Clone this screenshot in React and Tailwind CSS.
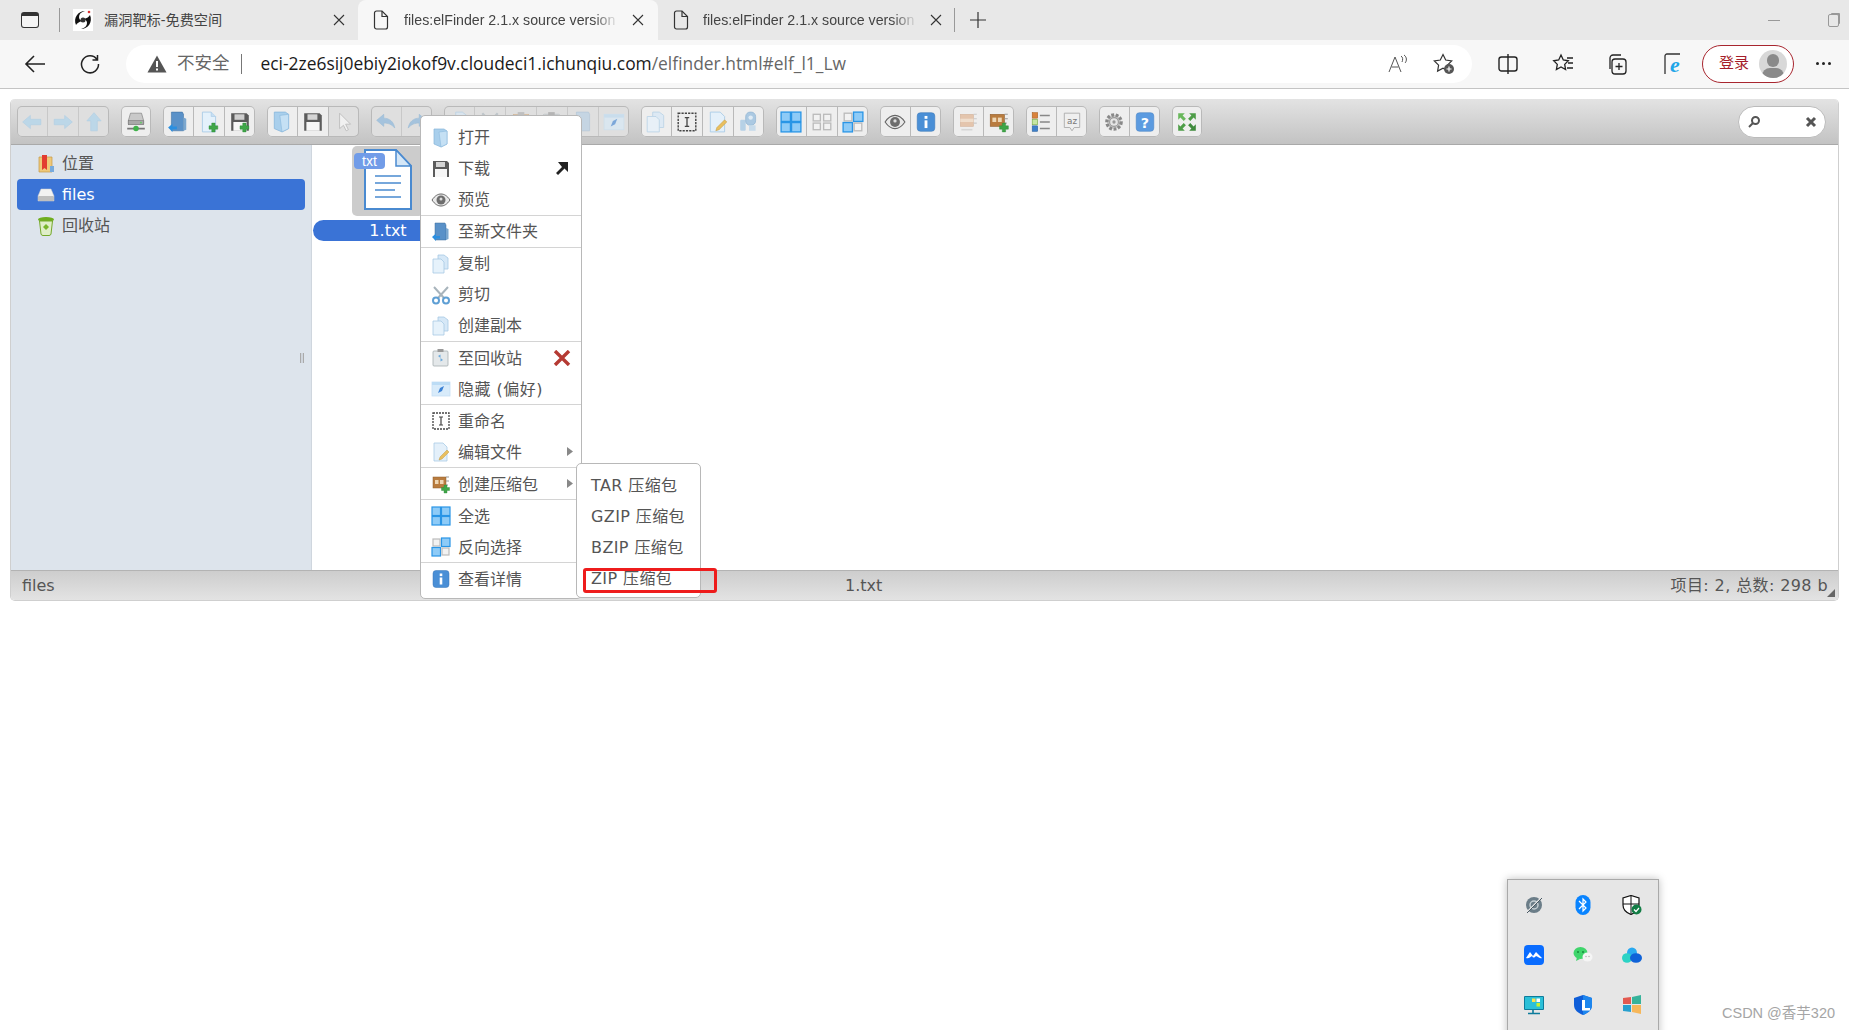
import React from "react";

const S = ({ s = 20, children, className = "" }) => (
  <svg width={s} height={s} viewBox="0 0 20 20" className={`shrink-0 ${className}`}>{children}</svg>
);
const Plus = ({ x = 14, y = 15 }) => (
  <path d={`M${x - 1.5} ${y - 4}h3v2.5h2.5v3h-2.5v2.5h-3v-2.5h-2.500v-3h2.500z`} fill="#3fa648" stroke="#2d8a38" strokeWidth=".4" />
);
const Ic = {
  left: <path d="M1.500 10 8.500 4v3.500H18v5H8.500V16z" fill="#a6d2ee" stroke="#93c4e6" strokeWidth=".6" />,
  right: <path d="M18.500 10 11.500 4v3.500H2v5h9.500V16z" fill="#a6d2ee" stroke="#93c4e6" strokeWidth=".6" />,
  up: <path d="M10 1.500 16.500 9H13v9H7V9H3.500z" fill="#a6d2ee" stroke="#93c4e6" strokeWidth=".6" />,
  drive: <><path d="M5 2h10l2 7v3H3V9z" fill="#c9c9c9" stroke="#8a8a8a" strokeWidth=".7" /><rect x="3" y="8.500" width="14" height="4" fill="#a8a8a8" stroke="#777" strokeWidth=".5" /><circle cx="14.500" cy="10.500" r=".8" fill="#5ed05e" /><path d="M2 16h16" stroke="#777" strokeWidth="1.500" /><circle cx="10" cy="16" r="2.500" fill="#3fb24a" /></>,
  mkdir: <><path d="M4 1h10l1 2v15H4z" fill="#5a91c8" stroke="#3f6f9f" strokeWidth=".5" /><path d="M15 6l2.500 1v10L15 18z" fill="#7ba7cf" /><path d="M1 15l4-3.500V14h4v2.500H5V19z" fill="#2b8fe0" /></>,
  mkfile: <><path d="M4 1h8l4 4v14H4z" fill="#e4f1fb" stroke="#a9cbe6" strokeWidth=".8" /><path d="M12 1v4h4" fill="#c6def2" stroke="#a9cbe6" strokeWidth=".6" /><Plus /></>,
  floppyAdd: <><path d="M2 2h14l2 2v14H2z" fill="#5a5a5a" /><rect x="5" y="3" width="9" height="5" fill="#cfcfcf" /><rect x="4" y="10" width="12" height="8" fill="#f7f7f7" /><Plus /></>,
  open: <><path d="M3 1h10l3 2v13l-6 3-7-3z" fill="#a9cfec" stroke="#86b5da" strokeWidth=".7" /><path d="M8 4l8-1v13l-6 3z" fill="#c5e0f4" stroke="#8dbbdd" strokeWidth=".6" /></>,
  floppy: <><path d="M2 2h14l2 2v14H2z" fill="#5c5c5c" /><rect x="5" y="3" width="9" height="5" fill="#d5d5d5" /><rect x="4" y="10" width="12" height="8" fill="#f7f7f7" /></>,
  cursor: <path d="M6 2v14l3.500-3 2.500 5 2-1-2.500-5H16z" fill="#f1f1f1" stroke="#bcbcbc" strokeWidth=".8" />,
  undo: <path d="M1.500 8.500 8 3v3.500c5 0 9 3 10 9-3-3.500-6-4.500-10-4.500V14z" fill="#7fb2dd" stroke="#6a9fcb" strokeWidth=".5" />,
  redo: <path d="M18.500 8.500 12 3v3.500c-5 0-9 3-10 9 3-3.500 6-4.500 10-4.500V14z" fill="#7fb2dd" stroke="#6a9fcb" strokeWidth=".5" />,
  copy: <><path d="M7 1h6l4 3v11H7z" fill="#d6e8f7" stroke="#a7c9e4" strokeWidth=".8" /><path d="M2 5h8l3 3v11H2z" fill="#e6f2fb" stroke="#a7c9e4" strokeWidth=".8" /></>,
  cut: <><path d="M3 2l10 11M17 2 7 13" stroke="#a8b4bc" strokeWidth="2" /><circle cx="5" cy="15.500" r="3" fill="none" stroke="#5f9fd4" strokeWidth="2" /><circle cx="15" cy="15.500" r="3" fill="none" stroke="#5f9fd4" strokeWidth="2" /></>,
  paste: <><rect x="3" y="3" width="14" height="15" fill="#e0b88c" stroke="#c89a68" strokeWidth=".6" /><rect x="7" y="1" width="6" height="4" fill="#aaa" /><rect x="6" y="7" width="9" height="10" fill="#f0f0f0" /></>,
  rm: <><rect x="2" y="3" width="15" height="15" rx="1" fill="#e4e8ea" stroke="#a5adb0" strokeWidth=".8" /><rect x="6.500" y="1" width="6" height="3" fill="#999" /><path d="M7 8l2.500-1.500V10zM12 12l-2.500 1.500V10z" fill="#6aa8dc" /></>,
  folderPale: <path d="M4 1h11l1 2v15H4z" fill="#b5cfe6" stroke="#92b4d0" strokeWidth=".6" />,
  hide: <><rect x="1" y="3" width="18" height="14" fill="#d8ebfa" stroke="#c5dff4" strokeWidth=".8" /><path d="M1 3h18v3H1z" fill="#bcdcf5" /><path d="M13 7l-2 5-4 2 2-5z" fill="#3c82d6" /></>,
  rename: <><rect x="2" y="2" width="16" height="16" fill="none" stroke="#444" strokeWidth="1.300" strokeDasharray="2 1" /><path d="M8 6h4M10 6v8M8 14h4" stroke="#444" strokeWidth="1.200" /></>,
  edit: <><path d="M3 1h9l4 4v14H3z" fill="#e4f0fa" stroke="#a9cbe6" strokeWidth=".8" /><path d="M8 18l1-3 7-7 2 2-7 7z" fill="#e9bf5f" stroke="#b78e32" strokeWidth=".4" /></>,
  resize: <><rect x="2" y="8" width="5" height="10" rx="1" fill="#9fc5e4" /><rect x="7" y="1" width="9" height="12" rx="4" fill="#8fbade" stroke="#6f9fc8" strokeWidth=".7" /><circle cx="11.500" cy="6" r="2" fill="#d9ebf8" /><rect x="10" y="13" width="6" height="5" fill="#b7d4ea" /></>,
  all: <><rect x="1" y="1" width="8.500" height="8.500" fill="#8ecbf7" stroke="#2995e6" strokeWidth="1.200" /><rect x="10.500" y="1" width="8.500" height="8.500" fill="#8ecbf7" stroke="#2995e6" strokeWidth="1.200" /><rect x="1" y="10.500" width="8.500" height="8.500" fill="#8ecbf7" stroke="#2995e6" strokeWidth="1.200" /><rect x="10.500" y="10.500" width="8.500" height="8.500" fill="#8ecbf7" stroke="#2995e6" strokeWidth="1.200" /></>,
  none: <><rect x="2" y="3" width="6.500" height="6" fill="#f2f2f2" stroke="#bbb" strokeWidth="1.200" /><rect x="11.500" y="3" width="6.500" height="6" fill="#f2f2f2" stroke="#bbb" strokeWidth="1.200" /><rect x="2" y="11" width="6.500" height="6" fill="#f2f2f2" stroke="#bbb" strokeWidth="1.200" /><rect x="11.500" y="11" width="6.500" height="6" fill="#f2f2f2" stroke="#bbb" strokeWidth="1.200" /></>,
  invert: <><rect x="2" y="2" width="7" height="7" fill="#f2f2f2" stroke="#bbb" strokeWidth="1.200" /><rect x="10.500" y="1" width="8.500" height="8.500" fill="#8ecbf7" stroke="#2995e6" strokeWidth="1.200" /><rect x="1" y="10.500" width="8.500" height="8.500" fill="#8ecbf7" stroke="#2995e6" strokeWidth="1.200" /><rect x="11" y="11" width="7" height="7" fill="#f2f2f2" stroke="#bbb" strokeWidth="1.200" /></>,
  eye: <><path d="M1 10c3-4.500 6-6 9-6s6 1.500 9 6c-3 4.500-6 6-9 6s-6-1.500-9-6z" fill="#e9e9e9" stroke="#666" strokeWidth="1" /><circle cx="10" cy="10" r="4.500" fill="#6d6d6d" /><circle cx="10" cy="9" r="1.500" fill="#ddd" /></>,
  info: <><rect x="2" y="1.500" width="16" height="17" rx="3" fill="#4a8fd6" stroke="#3a77b8" strokeWidth=".5" /><rect x="8.700" y="4.500" width="2.600" height="2.600" fill="#fff" /><rect x="8.700" y="8.500" width="2.600" height="7" fill="#fff" /></>,
  extract: <><rect x="3" y="3" width="12" height="11" fill="#e0b592" stroke="#c89a78" strokeWidth=".5" /><rect x="3" y="7" width="12" height="3" fill="#f0d8c0" /><path d="M15 3h3M15 7h3M15 11h3" stroke="#bbb" /><path d="M4 17h10" stroke="#ccc" strokeWidth="1.500" /></>,
  archive: <><rect x="2" y="3" width="13" height="11" fill="#b97c3f" stroke="#8f5c2b" strokeWidth=".5" /><rect x="4" y="6" width="3.500" height="4" fill="#eed7b5" /><rect x="9" y="6" width="3.500" height="4" fill="#eed7b5" /><path d="M15 3h3M15 7h3M15 11h2" stroke="#999" /><Plus x={14.500} y={15} /></>,
  list: <><rect x="2" y="1.500" width="5" height="5" fill="#d9823b" stroke="#a75f22" strokeWidth=".5" /><rect x="2" y="7.500" width="5" height="5" fill="#c6e6a3" stroke="#6fa43c" strokeWidth=".5" /><rect x="2" y="13.500" width="5" height="5" fill="#3d7fc9" stroke="#2c619c" strokeWidth=".5" /><path d="M9 4h9M9 10h9M9 16h9" stroke="#888" strokeWidth="1.400" /></>,
  sort: <><path d="M3 2h14v13h-5l-2 3-2-3H3z" fill="#efefef" stroke="#aaa" strokeWidth=".8" /><text x="10" y="12" textAnchor="middle" fontSize="8" fill="#777" fontFamily="DejaVu Sans">az</text></>,
  gear: <><circle cx="10" cy="10" r="6.500" fill="#c9c9c9" stroke="#888" strokeWidth="3" strokeDasharray="2.500 1.500" /><circle cx="10" cy="10" r="4" fill="#e5e5e5" stroke="#999" /><circle cx="10" cy="10" r="1.500" fill="#999" /></>,
  help: <><rect x="2" y="1.500" width="16" height="17" rx="3" fill="#5c9be0" stroke="#4a85c4" strokeWidth=".5" /><text x="10" y="15" textAnchor="middle" fontSize="13" fontWeight="700" fill="#fff" fontFamily="DejaVu Sans">?</text></>,
  full: <><path d="M2 2h6L6 4l3 3-2 2-3-3-2 2z" fill="#69b85c" /><path d="M18 2v6l-2-2-3 3-2-2 3-3-2-2z" fill="#4e9d48" /><path d="M2 18v-6l2 2 3-3 2 2-3 3 2 2z" fill="#4e9d48" /><path d="M18 18h-6l2-2-3-3 2-2 3 3 2-2z" fill="#3f8a3d" /></>,
};

const groups = [
  { d: 1, i: ["left", "right", "up"] },
  { i: ["drive"] },
  { i: ["mkdir", "mkfile", "floppyAdd"] },
  { i: ["open", "floppy"], extra: "cursor" },
  { d: 1, i: ["undo", "redo"] },
  { d: 1, i: ["copy", "cut", "paste", "rm", "folderPale", "hide"] },
  { i: ["copy", "rename", "edit", "resize"], dim: [0, 3] },
  { i: ["all", "none", "invert"] },
  { i: ["eye", "info"] },
  { i: ["extract", "archive"], dim: [0] },
  { i: ["list", "sort"] },
  { i: ["gear", "help"] },
  { i: ["full"] },
];

const menu = [
  [["open", "打开"], ["floppy", "下载", "arrow"], ["eye", "预览"]],
  [["mkdir", "至新文件夹"]],
  [["copy", "复制"], ["cut", "剪切"], ["copy", "创建副本"]],
  [["rm", "至回收站", "x"], ["hide", "隐藏 (偏好)"]],
  [["rename", "重命名"], ["edit", "编辑文件", "sub"]],
  [["archive", "创建压缩包", "sub"]],
  [["all", "全选"], ["invert", "反向选择"]],
  [["info", "查看详情"]],
];

const zh = "font-['Liberation_Sans','Noto_Sans_CJK_SC',sans-serif]";
const ef = "font-['DejaVu_Sans','Noto_Sans_CJK_SC',sans-serif]";

const PageIcon = () => (
  <svg width="16" height="20" viewBox="0 0 16 20" className="shrink-0" fill="none" stroke="#333" strokeWidth="1.200">
    <path d="M1.500 3a2 2 0 0 1 2-2h5.500l5.500 5.500V17a2 2 0 0 1-2 2h-9a2 2 0 0 1-2-2z" />
    <path d="M9 1v5.500h5.500" />
  </svg>
);
const X = () => (
  <svg width="12" height="12" viewBox="0 0 12 12" className="shrink-0" stroke="#333" strokeWidth="1.100"><path d="M1 1l10 10M11 1 1 11" /></svg>
);

function Tab({ active, title, className, gap, xgap }) {
  return (
    <div className={`flex items-center h-10 ${active ? "bg-[#f7f7f7] rounded-t-lg" : ""} ${className}`}>
      <PageIcon />
      <span className={`${gap} w-[215px] pt-px overflow-hidden whitespace-nowrap text-[14.200px] text-[#444] ${zh} [mask-image:linear-gradient(to_right,black_88%,transparent)]`}>{title}</span>
      <span className={`${xgap} flex`}><X /></span>
    </div>
  );
}

export default function App() {
  return (
    <div className="relative w-[1849px] h-[1030px] overflow-hidden bg-white">
      {/* tab strip */}
      <div className="flex items-center h-10 bg-[#e8e8e8]">
        <div className="ml-[21px] w-[18px] h-[16px] rounded-[3px] border-[1.500px] border-[#333] border-t-[4px] bg-[#f5f5f5]" />
        <div className="ml-5 w-px h-6 bg-[#999]" />
        <div className="ml-[13px] w-[285px] flex items-center">
          <svg width="20" height="22" viewBox="0 0 20 22" className="shrink-0">
            <rect width="20" height="22" fill="#fff" />
            <path d="M3 16C0 9 5 2 12 2c-4 1-6 3-6 6 0 2 1 3 3 4-3 1-5 2-6 4z" fill="#111" />
            <path d="M17 6c3 7-2 14-9 14 4-1 6-3 6-6 0-2-1-3-3-4 3-1 5-2 6-4z" fill="#111" />
            <circle cx="10" cy="11" r="2.500" fill="#333" />
            <circle cx="16" cy="3" r="1.300" fill="#d33" />
          </svg>
          <span className={`ml-[11px] pt-px text-[14.200px] text-[#444] ${zh}`}>漏洞靶标-免费空间</span>
          <span className="ml-auto mr-[13px] flex"><X /></span>
        </div>
        <Tab active title="files:elFinder 2.1.x source version" className="w-[300px] pl-[15px]" gap="ml-[15px]" xgap="ml-[13px]" />
        <Tab title="files:elFinder 2.1.x source version" className="w-[296px] pl-[15px]" gap="ml-[14px]" xgap="ml-[12px]" />
        <div className="w-px h-6 bg-[#999]" />
        <svg width="18" height="18" viewBox="0 0 18 18" className="ml-[14px]" stroke="#333" strokeWidth="1.200"><path d="M9 1v16M1 9h16" /></svg>
        <div className="ml-auto mr-[10px] flex items-center gap-[48px]">
          <div className="w-3 h-px bg-[#999]" />
          <div className="relative w-[11px] h-[13px] border border-[#999] rounded-[2px] bg-[#e8e8e8] shadow-[2px_-2px_0_-1px_#999]" />
        </div>
      </div>
      {/* address bar */}
      <div className="flex items-center h-[49px] bg-[#f7f7f7] border-b border-[#c4c4c4] pb-px">
        <svg width="22" height="20" viewBox="0 0 22 20" className="ml-6" stroke="#222" strokeWidth="1.600" fill="none"><path d="M21 10H2M10 2l-8 8 8 8" /></svg>
        <svg width="22" height="22" viewBox="0 0 22 22" className="ml-[33px]" stroke="#222" strokeWidth="1.500" fill="none"><path d="M18 6.500A8.500 8.500 0 1 0 19.500 11M18.500 2v5h-5" /></svg>
        <div className="ml-[25px] flex items-center w-[1346px] h-[38px] rounded-[19px] bg-white">
          <svg width="20" height="18" viewBox="0 0 20 18" className="ml-[21px]"><path d="M10 0.500 19.500 17.500H.5z" fill="#555" /><path d="M9 6h2v6H9zM9 13.500h2v2H9z" fill="#fff" /></svg>
          <span className={`ml-[10px] text-[17.500px] text-[#666] ${zh}`}>不安全</span>
          <span className="ml-[11px] w-px h-5 bg-[#777]" />
          <span className="ml-[19px] whitespace-nowrap text-[17.400px] text-[#1a1a1a] font-['Open_Sans',sans-serif]">eci-2ze6sij0ebiy2iokof9v.cloudeci1.ichunqiu.com<span className="text-[#666]">/elfinder.html#elf_l1_Lw</span></span>
          <div className="ml-auto flex items-center mr-[17px] gap-[24px]">
            <svg width="22" height="20" viewBox="0 0 22 20" fill="none" stroke="#555" strokeWidth="1"><path d="M2 18 8 3l6 15M4.500 13h7M14 2c2 1 2 4 1 6M17 1c3 2 3 6 1 8" /></svg>
            <svg width="22" height="22" viewBox="0 0 22 22"><path d="M10 1.500l2.700 5.500 6 .9-4.300 4.200 1 6-5.400-2.800-5.400 2.800 1-6L1.300 7.900l6-.9z" fill="none" stroke="#333" strokeWidth="1.200" /><circle cx="16" cy="16" r="5" fill="#555" /><path d="M16 13.500v5M13.500 16h5" stroke="#fff" strokeWidth="1.200" /></svg>
          </div>
        </div>
        <svg width="20" height="20" viewBox="0 0 20 20" className="ml-[26px]" fill="none" stroke="#222" strokeWidth="1.400"><rect x="1" y="3" width="18" height="14" rx="2.500" /><path d="M10 0v20" /></svg>
        <svg width="22" height="22" viewBox="0 0 22 22" className="ml-[34px]" fill="none" stroke="#222" strokeWidth="1.300"><path d="M9 2l2.300 5 5 .8-3.600 3.600.9 5.200L9 14l-4.600 2.600.9-5.200L1.700 7.800l5-.8zM15 5h6M16 10h5M15 15h6" /></svg>
        <svg width="22" height="22" viewBox="0 0 22 22" className="ml-[32px]" fill="none" stroke="#222" strokeWidth="1.300"><path d="M4 16V5a3 3 0 0 1 3-3h8" /><rect x="6" y="6" width="14" height="15" rx="3" /><path d="M13 10v7M9.500 13.500h7" /></svg>
        <svg width="22" height="24" viewBox="0 0 22 24" className="ml-[35px]"><path d="M2 22V4a2 2 0 0 1 2-2h13" fill="none" stroke="#333" strokeWidth="1.300" /><text x="12" y="20" textAnchor="middle" fontSize="22" fontWeight="700" fontStyle="italic" fill="#1fa6e8" fontFamily="Liberation Serif">e</text></svg>
        <div className="ml-[17px] flex items-center w-[92px] h-[38px] rounded-[19px] border border-[#a8262f] bg-white">
          <span className={`ml-4 text-[15px] text-[#a51d2a] ${zh}`}>登录</span>
          <div className="relative ml-[10px] w-[28px] h-[28px] rounded-full bg-[#d8d8d8] overflow-hidden">
            <div className="absolute left-[8px] top-[4px] w-3 h-[13px] rounded-full bg-[#8a8a8a]" />
            <div className="absolute left-[3px] top-[18px] w-[22px] h-[16px] rounded-full bg-[#8a8a8a]" />
          </div>
        </div>
        <div className="ml-[22px] flex gap-[3px]">
          <span className="w-[3px] h-[3px] rounded-full bg-[#222]" />
          <span className="w-[3px] h-[3px] rounded-full bg-[#222]" />
          <span className="w-[3px] h-[3px] rounded-full bg-[#222]" />
        </div>
      </div>

      {/* elFinder */}
      <div className={`mt-[10px] ml-[10px] w-[1829px] h-[502px] rounded-[5px] border border-[#cfcfcf] border-t-0 overflow-hidden flex flex-col ${ef}`}>
        <div className="flex items-center h-[46px] shrink-0 border-b border-[#a9a9a9] bg-gradient-to-b from-[#e3e3e3] to-[#c3c3c3] pl-[6px] gap-3">
          {groups.map((g, k) => (
            <div key={k} className={`flex h-[31px] rounded-[5px] shadow-[inset_0_0_0_1px_#b9b9b9] ${g.d ? "bg-[#dfdfdf]" : "bg-[#eeeeee]"}`}>
              {g.i.map((n, j) => (
                <div key={j} className={`flex items-center justify-center ${j < g.i.length - 1 || g.extra ? "w-[31px] border-r border-[#b9b9b9]" : "w-[30px]"} ${g.d ? "opacity-60" : ""}`}>
                  <S s={22} className={g.dim && g.dim.includes(j) ? "opacity-70" : ""}>{Ic[n]}</S>
                </div>
              ))}
              {g.extra && (
                <div className="flex items-center justify-center w-[30px] bg-[#dfdfdf] rounded-r-[5px] shadow-[inset_-1px_0_0_#b9b9b9,inset_0_1px_0_#b9b9b9,inset_0_-1px_0_#b9b9b9]">
                  <S s={22}>{Ic[g.extra]}</S>
                </div>
              )}
            </div>
          ))}
          <div className="ml-auto mr-[12px] flex items-center justify-between w-[88px] h-[32px] rounded-[16px] border border-[#bbb] bg-white px-[8px]">
            <svg width="14" height="14" viewBox="0 0 14 14" fill="none" stroke="#555" strokeWidth="2"><circle cx="8.500" cy="5.500" r="3.500" /><path d="M6 8l-4 4" /></svg>
            <svg width="12" height="12" viewBox="0 0 12 12" stroke="#555" strokeWidth="3"><path d="M2 2l8 8M10 2l-8 8" /></svg>
          </div>
        </div>
        <div className="flex flex-1 min-h-0 bg-white">
          <div className="relative w-[301px] shrink-0 bg-[#dde4ec] border-r border-[#cfd6de] pt-[3px] pl-[6px] pr-[6px]">
            {[["位置", 0], ["files", 1], ["回收站", 2]].map(([t, n]) => (
              <div key={t} className={`flex items-center h-[31px] pl-[19px] rounded-[4px] text-[16px] ${n === 1 ? "bg-[#3a73d6] text-white" : "text-[#555]"}`}>
                {n === 0 && <S s={20}><path d="M3 3h13v15H3z" fill="#efc878" stroke="#c49a45" strokeWidth=".7" /><path d="M6 1h5v15l-2.500-2L6 16z" fill="#e23b30" /><rect x="14" y="12" width="4" height="6" fill="#77aadd" /></S>}
                {n === 1 && <S s={20}><path d="M5 4h10l3 7v5H2v-5z" fill="#f2f2f2" stroke="#ccc" strokeWidth=".5" /><rect x="2" y="11" width="16" height="5" rx="1" fill="#bfbfbf" /></S>}
                {n === 2 && <S s={20}><ellipse cx="10" cy="3.500" rx="8" ry="2.500" fill="#6fae1e" /><path d="M3.500 5h13L15 18a2 2 0 0 1-2 1.500H7A2 2 0 0 1 5 18z" fill="#dfeec8" stroke="#74a82b" /><path d="M7 11l3-3 3 3-3 3z" fill="#78b52b" /></S>}
                <span className="ml-[6px]">{t}</span>
              </div>
            ))}
            <div className="absolute left-[289px] top-[208px] w-1 h-[10px] border-x border-[#aaa] bg-[#cfd5dd]" />
          </div>
          <div className="flex-1 pl-px pt-px">
            <div className="flex flex-col items-center w-[150px]">
              <div className="relative flex justify-center w-[72px] h-[70px] rounded-[5px] bg-[#cccccc] pt-[3px]">
                <svg width="48" height="61" viewBox="0 0 48 61">
                  <path d="M1 1h31l15 16v43H1z" fill="#fff" stroke="#4a8ad0" strokeWidth="2" />
                  <path d="M32 1v16h15z" fill="#d5e7f7" stroke="#4a8ad0" strokeWidth="1.500" />
                  <path d="M11 27h26M11 34h26M11 41h20M11 48h26" stroke="#4a8ad0" strokeWidth="1.600" />
                </svg>
                <span className="absolute left-[2px] top-[7px] w-[31px] h-4 rounded-[4px] bg-[#719ce8] text-white text-[14px] leading-4 text-center font-['Liberation_Sans',sans-serif]">txt</span>
              </div>
              <div className="mt-1 w-full h-[21px] rounded-l-[11px] bg-[#3a73d6] text-white text-[16px] leading-[21px] text-center">1.txt</div>
            </div>
          </div>
        </div>
        <div className="relative flex items-center justify-between h-[30px] shrink-0 border-t border-[#b3b3b3] bg-gradient-to-b from-[#cdcdcd] to-[#e3e3e3] pl-[11px] pr-[10px] text-[#555] text-[16px]">
          <span>files</span>
          <span className="absolute left-[834px]">1.txt</span>
          <span className="tracking-[0.4px]">项目: 2, 总数: 298 b</span>
          <svg width="10" height="10" viewBox="0 0 10 10" className="absolute right-[2px] bottom-[2px]"><path d="M9 1 1 9h8z" fill="#666" /></svg>
        </div>
      </div>

      {/* context menu */}
      <div className={`absolute left-[420px] top-[115px] w-[162px] h-[484px] rounded-[5px] border border-[#b8b8b8] bg-white pt-[6px] text-[16px] text-[#555] ${ef}`}>
        {menu.map((sec, a) => (
          <div key={a} className={a < menu.length - 1 ? "border-b border-[#d4d4d4]" : ""}>
            {sec.map(([ic, t, r]) => (
              <div key={t} className="relative flex items-center h-[31px] pl-[10px]">
                <S s={20}>{Ic[ic]}</S>
                <span className={`ml-[7px] relative ${a >= 3 ? "top-px" : "top-0"} ${t.includes("(") ? "tracking-[0.5px]" : ""}`}>{t}</span>
                {r === "arrow" && <svg width="14" height="15" viewBox="0 0 14 15" className="absolute right-[12px]"><path d="M3 1h10v10l-3.500-3.500L3 14 1 12l6-6z" fill="#222" /></svg>}
                {r === "x" && <svg width="18" height="16" viewBox="0 0 18 16" className="absolute right-[10px]" stroke="#b53a33" strokeWidth="3.400"><path d="M2 1l14 14M16 1 2 15" /></svg>}
                {r === "sub" && <svg width="6" height="9" viewBox="0 0 6 9" className="absolute right-[8px]"><path d="M0 0l6 4.500L0 9z" fill="#888" /></svg>}
              </div>
            ))}
          </div>
        ))}
      </div>

      {/* submenu */}
      <div className={`absolute left-[576px] top-[463px] w-[125px] h-[135px] rounded-[5px] border border-[#b8b8b8] bg-white pt-[6px] text-[16px] text-[#555] tracking-[0.4px] ${ef}`}>
        {["TAR 压缩包", "GZIP 压缩包", "BZIP 压缩包", "ZIP 压缩包"].map((t) => (
          <div key={t} className="flex items-center h-[31px] pl-[14px]">{t}</div>
        ))}
      </div>
      <div className="absolute left-[583px] top-[568px] w-[134px] h-[25px] rounded-[3px] border-[3px] border-[#ee1c1c]" />

      {/* tray flyout */}
      <div className="absolute left-[1507px] top-[879px] w-[152px] h-[160px] border border-[#a9a9a9] bg-[#e6e6e6] shadow-[0_0_8px_rgba(0,0,0,.25)] grid grid-cols-3 grid-rows-[50px_50px_50px] px-px">
        <div className="flex items-center justify-center">
          <svg width="20" height="20" viewBox="0 0 20 20"><circle cx="10" cy="10" r="8" fill="#6b7d88" /><circle cx="10" cy="10" r="4" fill="none" stroke="#c5ced3" strokeWidth="1.500" /><path d="M2 18 18 2" stroke="#e6e6e6" strokeWidth="1.500" /><path d="M3 18 18 3" stroke="#4a5a64" strokeWidth="1" /></svg>
        </div>
        <div className="flex items-center justify-center">
          <svg width="16" height="20" viewBox="0 0 16 20"><rect x=".5" y="0" width="15" height="20" rx="7.500" fill="#0a84ff" /><path d="M4 6l7 7-3 3V4l3 3-7 7" fill="none" stroke="#fff" strokeWidth="1.200" /></svg>
        </div>
        <div className="flex items-center justify-center">
          <svg width="20" height="20" viewBox="0 0 20 20"><path d="M9 .5 17 3v7c0 5-4 8-8 9.500C5 18 1 15 1 10V3z" fill="#fff" stroke="#111" strokeWidth="1.200" /><path d="M9 1v18M1 9h16" stroke="#111" /><circle cx="14.500" cy="14.500" r="5" fill="#127d45" /><path d="M12 14.500l2 2 3-3.500" fill="none" stroke="#fff" strokeWidth="1.200" /></svg>
        </div>
        <div className="flex items-center justify-center">
          <svg width="20" height="20" viewBox="0 0 20 20"><rect width="20" height="20" rx="4" fill="#0a6cff" /><path d="M2 13l4-6 3 4 3-4 6 6c-2 1-3-1-6-2-2 2-3 2-4 0-2 1-3 3-6 2z" fill="#fff" /></svg>
        </div>
        <div className="flex items-center justify-center">
          <svg width="20" height="20" viewBox="0 0 20 20"><ellipse cx="7.500" cy="8" rx="7" ry="6" fill="#3fd56b" /><path d="M4 12l-1 4 4-2z" fill="#3fd56b" /><circle cx="5" cy="7" r="1" fill="#188a3c" /><circle cx="10" cy="7" r="1" fill="#188a3c" /><ellipse cx="14.500" cy="12" rx="5" ry="4.500" fill="#f5f5f5" /><circle cx="13" cy="11.500" r=".7" fill="#aaa" /><circle cx="16" cy="11.500" r=".7" fill="#aaa" /></svg>
        </div>
        <div className="flex items-center justify-center">
          <svg width="20" height="16" viewBox="0 0 20 16"><ellipse cx="10" cy="6" rx="5" ry="5.500" fill="#29a9f0" /><ellipse cx="5" cy="11" rx="5" ry="4.800" fill="#2cd3c5" /><ellipse cx="14" cy="11" rx="6" ry="4.800" fill="#0f62d8" /></svg>
        </div>
        <div className="flex items-center justify-center">
          <svg width="20" height="20" viewBox="0 0 20 20"><rect y="1" width="20" height="14" rx="1" fill="#0d7c9c" /><rect x="1" y="2" width="18" height="12" fill="#2bc0d8" /><rect x="8" y="3.500" width="3.500" height="3.500" fill="#ffe14d" /><rect x="12.500" y="3.500" width="3.500" height="3.500" fill="#fff" /><rect x="12.500" y="8" width="3.500" height="3.500" fill="#c6f02e" /><path d="M9 15v3M4 18.500h12" stroke="#0d7c9c" strokeWidth="1.600" /></svg>
        </div>
        <div className="flex items-center justify-center">
          <svg width="18" height="20" viewBox="0 0 18 20"><path d="M9 0 18 3v7c0 5-4 8-9 10C4 18 0 15 0 10V3z" fill="#0f5ed8" /><path d="M9 0 18 3v7c0 5-4 8-9 10z" fill="#1d86ee" /><path d="M8 5h3v8h5v2.500H8z" fill="#fff" /></svg>
        </div>
        <div className="flex items-center justify-center">
          <svg width="20" height="20" viewBox="0 0 20 20"><path d="M1 3l8-1v7H1z" fill="#e35a50" /><path d="M10 2l9-2v9h-9z" fill="#37b39b" /><path d="M1 10h8v7l-8-1z" fill="#27a0cf" /><path d="M10 10h9v9l-9-2z" fill="#f6b75a" /></svg>
        </div>
      </div>

      <span className="absolute left-[1722px] top-[1003px] text-[14.500px] text-[#a5a5a5] font-['Liberation_Sans','Noto_Sans_CJK_SC',sans-serif]">CSDN @香芋320</span>
    </div>
  );
}
